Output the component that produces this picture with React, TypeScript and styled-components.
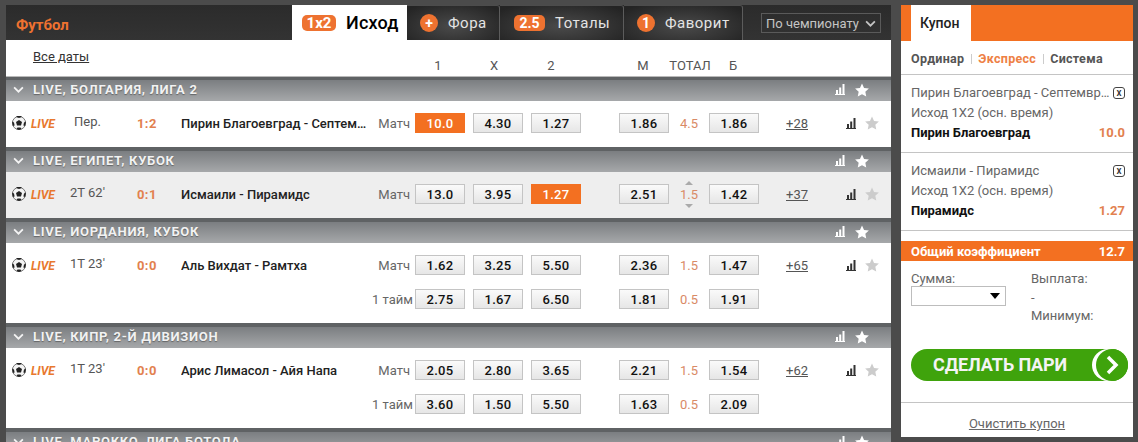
import styled, { createGlobalStyle } from 'styled-components';

const GlobalStyle = createGlobalStyle`
  html, body {
    margin: 0;
    padding: 0;
    height: 442px;
    overflow: hidden;
    background: #4b4b4b;
    font-family: Roboto, "Liberation Sans", sans-serif;
  }
  * { box-sizing: border-box; }
`;

const ORANGE = '#f37021';

const Page = styled.div`
  display: flex;
  align-items: flex-start;
  gap: 10px;
  height: 442px;
  padding: 5px 5px 0 6px;
  overflow: hidden;
`;

const Main = styled.main`
  width: 885px;
  flex: none;
`;

const TopBar = styled.div`
  display: flex;
  height: 35px;
  background: linear-gradient(#2b2b2b, #333);
`;

const Sport = styled.div`
  width: 286px;
  padding: 11px 0 0 10px;
  color: #ee7230;
  font-size: 15px;
  font-weight: 700;
`;

const Tab = styled.div<{ $active?: boolean; $width: number; $inset: number }>`
  display: flex;
  align-items: center;
  gap: 10px;
  width: ${(p) => p.$width}px;
  padding-left: ${(p) => p.$inset}px;
  background: ${(p) => (p.$active ? '#fff' : 'radial-gradient(ellipse at 50% 60%, #4a4a4a, #242424 90%)')};
  color: ${(p) => (p.$active ? '#000' : '#e4e4e4')};
  font-size: ${(p) => (p.$active ? 18 : 15)}px;
  font-weight: ${(p) => (p.$active ? 500 : 400)};
  letter-spacing: ${(p) => (p.$active ? 0.2 : 0.5)}px;
  border-right: ${(p) => (p.$active ? 'none' : '1px solid #5c5c5c')};
  border-top: ${(p) => (p.$active ? 'none' : '1px solid #4c4c4c')};
  border-top-right-radius: ${(p) => (p.$active ? 0 : 3)}px;
`;

const Badge = styled.span<{ $round?: boolean; $wide?: boolean }>`
  display: flex;
  align-items: center;
  justify-content: center;
  height: ${(p) => (p.$round ? 18 : 16)}px;
  min-width: ${(p) => (p.$round ? 18 : p.$wide ? 34 : 31)}px;
  padding: 0 2px;
  border-radius: ${(p) => (p.$round ? '50%' : '5px')};
  background: #ee7230;
  color: #fff;
  font-size: ${(p) => (p.$wide ? 15 : 14)}px;
  font-weight: 700;
  letter-spacing: 0;
`;

const SortBox = styled.div`
  display: flex;
  align-items: center;
  justify-content: space-between;
  width: 120px;
  height: 20px;
  margin: 8px 0 0 18px;
  padding: 0 4px;
  border: 1px solid #5a5a5a;
  color: #c4c4c4;
  font-size: 13px;
`;

const SubHeader = styled.div`
  position: relative;
  height: 37px;
  background: #fff;
  border-bottom: 1px solid #b9b9b9;
`;

const DatesLink = styled.a`
  position: absolute;
  left: 27px;
  top: 9px;
  color: #333;
  font-size: 13px;
  text-decoration: underline;
`;

const ColumnTitles = styled.div`
  position: absolute;
  left: 0;
  top: 18px;
  display: flex;
  padding-left: 404px;
  color: #555;
  font-size: 13px;
  line-height: 16px;
`;

const ColumnTitle = styled.span<{ $width: number; $gap?: number }>`
  width: ${(p) => p.$width}px;
  margin-left: ${(p) => p.$gap ?? 0}px;
  text-align: center;
`;

const GroupHead = styled.div<{ $first?: boolean }>`
  display: flex;
  align-items: center;
  height: ${(p) => (p.$first ? 24 : 25)}px;
  padding: ${(p) => (p.$first ? '1px' : '2px')} 0 0 7px;
  background: linear-gradient(#5f6264 0, #5f6264 ${(p) => (p.$first ? 3 : 4)}px, #7b7e81 ${(p) => (p.$first ? 3 : 4)}px, #a6a8aa 100%);
  color: #f2f2f2;
  font-size: 13px;
  font-weight: 700;
  letter-spacing: 0.7px;
  text-shadow: 0 1px 1px rgba(0, 0, 0, 0.35);
`;

const GroupName = styled.span`
  flex: 1;
  margin-left: 9px;
`;

const GroupTools = styled.div`
  display: flex;
  align-items: center;
  gap: 10px;
  width: 56px;
`;

const MatchRow = styled.div<{ $shaded?: boolean }>`
  display: flex;
  padding: 12px 0 14px 6px;
  background: ${(p) => (p.$shaded ? '#eeeeee' : '#fff')};
`;

const MatchInfo = styled.div`
  display: flex;
  align-items: center;
  width: 357px;
  height: 20px;
  flex: none;
`;

const Live = styled.span`
  width: 37px;
  margin-left: 5px;
  padding-top: 1px;
  color: #e8782e;
  font-size: 12px;
  font-weight: 700;
  font-style: italic;
`;

const Clock = styled.span<{ $inset: number }>`
  width: 69px;
  padding-left: ${(p) => p.$inset}px;
  color: #555;
  font-size: 13px;
  margin-top: -3px;
`;

const Score = styled.span`
  width: 44px;
  color: #e2814f;
  font-size: 13px;
  font-weight: 700;
  letter-spacing: 0.4px;
`;

const Teams = styled.span`
  width: 188px;
  overflow: hidden;
  color: #222;
  font-size: 13px;
  font-weight: 500;
  white-space: nowrap;
  text-overflow: ellipsis;
`;

const Lines = styled.div`
  display: flex;
  flex-direction: column;
  gap: 14px;
`;

const Line = styled.div`
  display: flex;
  align-items: center;
  height: 20px;
`;

const Market = styled.span<{ $tight?: boolean }>`
  width: 46px;
  margin-top: 1px;
  padding-right: ${(p) => (p.$tight ? 2 : 5)}px;
  color: #666;
  font-size: 13px;
  text-align: right;
  white-space: nowrap;
`;

const Odd = styled.div<{ $picked?: boolean; $gap?: number }>`
  display: flex;
  align-items: center;
  justify-content: center;
  width: 50px;
  height: 20px;
  margin-right: ${(p) => p.$gap ?? 0}px;
  border: 1px solid ${(p) => (p.$picked ? ORANGE : '#c4c4c4')};
  background: ${(p) => (p.$picked ? ORANGE : 'linear-gradient(#fafafa, #e6e6e6)')};
  color: ${(p) => (p.$picked ? '#fff' : '#111')};
  font-size: 13px;
  font-weight: 500;
  letter-spacing: 0.3px;
`;

const Total = styled.div`
  position: relative;
  width: 40px;
  margin-top: 1px;
  color: #d98a66;
  font-size: 13px;
  text-align: center;
`;

const Arrow = styled.i<{ $down?: boolean }>`
  position: absolute;
  left: 16px;
  ${(p) => (p.$down ? 'bottom: -6px;' : 'top: -6px;')}
  border-left: 4px solid transparent;
  border-right: 4px solid transparent;
  ${(p) => (p.$down ? 'border-top: 4px solid #aaa;' : 'border-bottom: 4px solid #aaa;')}
`;

const More = styled.a`
  width: 60px;
  margin-left: 27px;
  margin-top: 1px;
  color: #555;
  font-size: 13px;
  text-decoration: underline;
`;

const RowTools = styled.div`
  display: flex;
  align-items: center;
  gap: 9px;
`;

const Coupon = styled.aside`
  width: 232px;
  height: 432px;
  flex: none;
  background: #fff;
`;

const CouponHead = styled.div`
  height: 36px;
  padding-left: 10px;
  background: ${ORANGE};
`;

const CouponTab = styled.div`
  width: 60px;
  height: 36px;
  padding: 10px 0 0 9px;
  background: #fff;
  color: #222;
  font-size: 14px;
  font-weight: 500;
`;

const BetTypes = styled.div`
  display: flex;
  align-items: center;
  height: 34px;
  padding: 3px 0 0 10px;
  border-bottom: 1px solid #c4c4c4;
  font-size: 12.5px;
  font-weight: 700;
  color: #555;
`;

const BetType = styled.span<{ $active?: boolean; $line?: boolean }>`
  color: ${(p) => (p.$active ? '#ee8044' : '#555')};
  padding-left: ${(p) => (p.$line ? 6 : 0)}px;
  margin-left: ${(p) => (p.$line ? 7 : 0)}px;
  border-left: ${(p) => (p.$line ? '1px solid #ccc' : 'none')};
  line-height: 10px;
  letter-spacing: 0.3px;
`;

const Slip = styled.div`
  height: 78px;
  padding: 8px 8px 0 10px;
  border-bottom: 1px solid #c4c4c4;
  font-size: 13px;
  line-height: 20px;
  color: #666;
`;

const SlipTop = styled.div`
  display: flex;
  align-items: center;
  justify-content: space-between;
`;

const SlipEvent = styled.span`
  width: 200px;
  overflow: hidden;
  white-space: nowrap;
  text-overflow: ellipsis;
`;

const CloseBox = styled.span`
  display: flex;
  align-items: center;
  justify-content: center;
  width: 12px;
  height: 12px;
  border: 1px solid #444;
  border-radius: 3px;
  color: #333;
  font-size: 10px;
  font-weight: 500;
  line-height: 10px;
`;

const SlipPick = styled.div`
  display: flex;
  justify-content: space-between;
  color: #111;
  font-weight: 700;
  font-size: 13px;
`;

const SlipOdd = styled.span`
  color: #e2814f;
`;

const TotalBar = styled.div`
  display: flex;
  align-items: center;
  justify-content: space-between;
  height: 20px;
  margin-top: 10px;
  padding: 0 8px 0 10px;
  background: ${ORANGE};
  color: #fff;
  font-size: 13px;
  font-weight: 700;
`;

const StakeArea = styled.div`
  display: flex;
  height: 88px;
  padding: 10px 0 0 10px;
  color: #666;
  font-size: 13px;
`;

const StakeCol = styled.div`
  width: 120px;
`;

const StakeLabel = styled.div`
  line-height: 15px;
`;

const StakeSelect = styled.div`
  position: relative;
  width: 95px;
  height: 20px;
  border: 1px solid #bdbdbd;
`;

const SelectArrow = styled.i`
  position: absolute;
  right: 5px;
  top: 6px;
  border-left: 5px solid transparent;
  border-right: 5px solid transparent;
  border-top: 6px solid #000;
`;

const PayoutLines = styled.div`
  line-height: 18.5px;
  margin-top: -1px;
`;

const PlaceBet = styled.div`
  position: relative;
  width: 217px;
  height: 32px;
  margin-left: 10px;
  padding-left: 22px;
  border-radius: 16px;
  background: #3fa30c;
  color: #f4f4f4;
  font-size: 18px;
  font-weight: 700;
  line-height: 32px;
  letter-spacing: -0.1px;
`;

const BetCircle = styled.span`
  position: absolute;
  right: 0;
  top: 0;
  display: flex;
  align-items: center;
  justify-content: center;
  width: 32px;
  height: 32px;
  border-radius: 50%;
  background: #3fa30c;
  box-shadow: -4px 0 0 #fff;
`;

const ClearRow = styled.div`
  height: 35px;
  margin-top: 21px;
  padding-top: 10px;
  border-top: 1px solid #c4c4c4;
  text-align: center;
`;

const ClearLink = styled.a`
  color: #666;
  font-size: 13px;
  text-decoration: underline;
`;

const BallIcon = styled.svg`
  flex: none;
`;

const Chevron = ({ color, width, height }: { color: string; width: number; height: number }) => (
  <svg width={width} height={height} viewBox="0 0 12 8" fill="none">
    <path d="M1 1.5 6 6.5 11 1.5" stroke={color} strokeWidth="2" />
  </svg>
);

const Ball = () => (
  <BallIcon width="14" height="14" viewBox="0 0 14 14">
    <circle cx="7" cy="7" r="6.6" fill="#f4f4f4" stroke="#555" strokeWidth="0.8" />
    <path d="M7 4 10 6 9 9.4H5L4 6Z" fill="#222" />
    <path d="M4.2 .9 7 2 9.8 .9 9 0H5ZM0 5.5 2 6.5 2.6 9.5.9 10ZM14 5.5 12 6.5 11.4 9.5 13.1 10ZM4.5 13 5.5 11.4H8.5L9.5 13 7 14Z" fill="#222" />
  </BallIcon>
);

const Bars = ({ color }: { color: string }) => (
  <svg width="10" height="11" viewBox="0 0 10 11">
    <path d="M0 10h10v1H0zM1 6h2v4H1zM4.2 3.500h2V10h-2zM7.500 0h2v10h-2z" fill={color} />
  </svg>
);

const Star = ({ color }: { color: string }) => (
  <svg width="14" height="14" viewBox="0 0 24 24">
    <path d="M12 .8l3.500 7.600 8.300 1-6.100 5.700 1.600 8.200L12 19.200 4.700 23.300l1.600-8.200L.2 9.400l8.300-1z" fill={color} />
  </svg>
);

type MarketLine = { label: string; odds: string[]; m: string; total: string; b: string; picked?: number; arrows?: boolean };
type Match = { clock: string; inset: number; score: string; teams: string; more: string; shaded?: boolean; markets: MarketLine[] };
type Group = { title: string; matches: Match[] };

const groups: Group[] = [
  {
    title: 'LIVE, БОЛГАРИЯ, ЛИГА 2',
    matches: [
      {
        clock: 'Пер.',
        inset: 6,
        score: '1:2',
        teams: 'Пирин Благоевград - Септемврий София',
        more: '+28',
        markets: [{ label: 'Матч', odds: ['10.0', '4.30', '1.27'], m: '1.86', total: '4.5', b: '1.86', picked: 0 }],
      },
    ],
  },
  {
    title: 'LIVE, ЕГИПЕТ, КУБОК',
    matches: [
      {
        clock: "2T 62'",
        inset: 2,
        score: '0:1',
        teams: 'Исмаили - Пирамидс',
        more: '+37',
        shaded: true,
        markets: [{ label: 'Матч', odds: ['13.0', '3.95', '1.27'], m: '2.51', total: '1.5', b: '1.42', picked: 2, arrows: true }],
      },
    ],
  },
  {
    title: 'LIVE, ИОРДАНИЯ, КУБОК',
    matches: [
      {
        clock: "1T 23'",
        inset: 2,
        score: '0:0',
        teams: 'Аль Вихдат - Рамтха',
        more: '+65',
        markets: [
          { label: 'Матч', odds: ['1.62', '3.25', '5.50'], m: '2.36', total: '1.5', b: '1.47' },
          { label: '1 тайм', odds: ['2.75', '1.67', '6.50'], m: '1.81', total: '0.5', b: '1.91' },
        ],
      },
    ],
  },
  {
    title: 'LIVE, КИПР, 2-Й ДИВИЗИОН',
    matches: [
      {
        clock: "1T 23'",
        inset: 2,
        score: '0:0',
        teams: 'Арис Лимасол - Айя Напа',
        more: '+62',
        markets: [
          { label: 'Матч', odds: ['2.05', '2.80', '3.65'], m: '2.21', total: '1.5', b: '1.54' },
          { label: '1 тайм', odds: ['3.60', '1.50', '5.50'], m: '1.63', total: '0.5', b: '2.09' },
        ],
      },
    ],
  },
  { title: 'LIVE, МАРОККО, ЛИГА БОТОЛА', matches: [] },
];

const App = () => (
  <Page>
    <GlobalStyle />
    <Main>
      <TopBar>
        <Sport>Футбол</Sport>
        <Tab $active $width={115} $inset={10}>
          <Badge $wide>1x2</Badge>Исход
        </Tab>
        <Tab $width={93} $inset={13}>
          <Badge $round>+</Badge>Фора
        </Tab>
        <Tab $width={124} $inset={14}>
          <Badge>2.5</Badge>Тоталы
        </Tab>
        <Tab $width={119} $inset={13}>
          <Badge $round>1</Badge>Фаворит
        </Tab>
        <SortBox>
          По чемпионату
          <Chevron color="#c4c4c4" width={11} height={7} />
        </SortBox>
      </TopBar>
      <SubHeader>
        <DatesLink>Все даты</DatesLink>
        <ColumnTitles>
          <ColumnTitle $width={56}>1</ColumnTitle>
          <ColumnTitle $width={56}>Х</ColumnTitle>
          <ColumnTitle $width={58}>2</ColumnTitle>
          <ColumnTitle $width={50} $gap={38}>М</ColumnTitle>
          <ColumnTitle $width={44}>ТОТАЛ</ColumnTitle>
          <ColumnTitle $width={42}>Б</ColumnTitle>
        </ColumnTitles>
      </SubHeader>
      {groups.map((group, i) => (
        <div key={group.title}>
          <GroupHead $first={i === 0}>
            <Chevron color="#f4f4f4" width={11} height={7} />
            <GroupName>{group.title}</GroupName>
            <GroupTools>
              <Bars color="#fff" />
              <Star color="#fff" />
            </GroupTools>
          </GroupHead>
          {group.matches.map((match) => (
            <MatchRow key={match.teams} $shaded={match.shaded}>
              <MatchInfo>
                <Ball />
                <Live>LIVE</Live>
                <Clock $inset={match.inset}>{match.clock}</Clock>
                <Score>{match.score}</Score>
                <Teams>{match.teams}</Teams>
              </MatchInfo>
              <Lines>
                {match.markets.map((market, j) => (
                  <Line key={market.label}>
                    <Market $tight={j > 0}>{market.label}</Market>
                    {market.odds.map((odd, k) => (
                      <Odd key={k} $picked={market.picked === k} $gap={k === 2 ? 38 : 8}>
                        {odd}
                      </Odd>
                    ))}
                    <Odd>{market.m}</Odd>
                    <Total>
                      {market.arrows && <Arrow />}
                      {market.total}
                      {market.arrows && <Arrow $down />}
                    </Total>
                    <Odd>{market.b}</Odd>
                    {j === 0 && (
                      <>
                        <More>{match.more}</More>
                        <RowTools>
                          <Bars color="#333" />
                          <Star color="#ccc" />
                        </RowTools>
                      </>
                    )}
                  </Line>
                ))}
              </Lines>
            </MatchRow>
          ))}
        </div>
      ))}
    </Main>
    <Coupon>
      <CouponHead>
        <CouponTab>Купон</CouponTab>
      </CouponHead>
      <BetTypes>
        <BetType>Ординар</BetType>
        <BetType $line $active>Экспресс</BetType>
        <BetType $line>Система</BetType>
      </BetTypes>
      <Slip>
        <SlipTop>
          <SlipEvent>Пирин Благоевград - Септемврий София</SlipEvent>
          <CloseBox>x</CloseBox>
        </SlipTop>
        <div>Исход 1Х2 (осн. время)</div>
        <SlipPick>
          Пирин Благоевград<SlipOdd>10.0</SlipOdd>
        </SlipPick>
      </Slip>
      <Slip>
        <SlipTop>
          <SlipEvent>Исмаили - Пирамидс</SlipEvent>
          <CloseBox>x</CloseBox>
        </SlipTop>
        <div>Исход 1Х2 (осн. время)</div>
        <SlipPick>
          Пирамидс<SlipOdd>1.27</SlipOdd>
        </SlipPick>
      </Slip>
      <TotalBar>
        Общий коэффициент<span>12.7</span>
      </TotalBar>
      <StakeArea>
        <StakeCol>
          <StakeLabel>Сумма:</StakeLabel>
          <StakeSelect>
            <SelectArrow />
          </StakeSelect>
        </StakeCol>
        <PayoutLines>
          <div>Выплата:</div>
          <div>-</div>
          <div>Минимум:</div>
        </PayoutLines>
      </StakeArea>
      <PlaceBet>
        СДЕЛАТЬ ПАРИ
        <BetCircle>
          <svg width="14" height="20" viewBox="0 0 14 20" fill="none">
            <path d="M3 2 11 10 3 18" stroke="#fff" strokeWidth="3.5" />
          </svg>
        </BetCircle>
      </PlaceBet>
      <ClearRow>
        <ClearLink>Очистить купон</ClearLink>
      </ClearRow>
    </Coupon>
  </Page>
);

export default App;
